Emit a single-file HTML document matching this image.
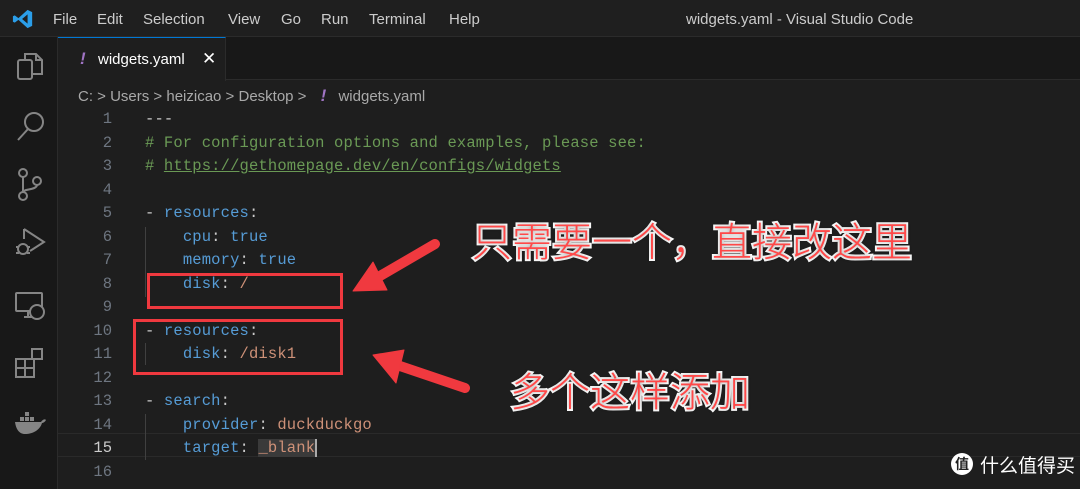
<!DOCTYPE html>
<html><head><meta charset="utf-8"><style>
*{margin:0;padding:0;box-sizing:border-box}
body{width:1080px;height:489px;background:#1e1e1e;overflow:hidden;position:relative;font-family:"Liberation Sans","Noto Sans CJK SC",sans-serif}
.title{position:absolute;left:0;top:0;width:1080px;height:37px;background:#1f1f1f;border-bottom:1px solid #2b2b2b;color:#ccc;font-size:15px}
.title span{position:absolute;top:11px}
.act{position:absolute;left:0;top:37px;width:58px;height:452px;background:#181818;border-right:1px solid #2b2b2b}
.tabs{position:absolute;left:58px;top:37px;width:1022px;height:43px;background:#181818;border-bottom:1px solid #2b2b2b}
.tab{position:absolute;left:0;top:0;width:168px;height:44px;background:#1e1e1e;border-top:1px solid #0078d4;border-right:1px solid #2b2b2b;color:#fff;font-size:15px}
.bc{position:absolute;left:78px;top:86px;color:#a9a9a9;font-size:15px}
.code{position:absolute;left:0;top:108px;font-family:"Liberation Mono",monospace;font-size:15.5px;line-height:23.5px}
.ln{position:absolute;left:60px;width:52px;text-align:right;color:#6e7681}
.tx{position:absolute;left:145px;white-space:pre;color:#ccc;letter-spacing:0.15px}
.c{color:#6a9955}.k{color:#569cd6}.s{color:#ce9178}
.box{position:absolute;border:3px solid #f0393f}
.ann{position:absolute;font-size:40px;color:#ff4848;-webkit-text-stroke:4px #fff;paint-order:stroke fill;font-family:"Noto Sans CJK SC",sans-serif;font-weight:300;text-shadow:0 0 4px rgba(0,0,0,.4)}
.guide{position:absolute;width:1px;background:#404040}
</style></head><body>
<div class="title">
<svg style="position:absolute;left:12px;top:8px" width="22" height="22" viewBox="0 0 24 24"><path d="M17 2 L22 4.5 V19.5 L17 22 L7 13 L3 16 L1 15 V9 L3 8 L7 11 Z M17 7 L11 12 L17 17 Z" fill="#2b9ee9"/></svg>
<span style="left:53px">File</span><span style="left:97px">Edit</span><span style="left:143px">Selection</span><span style="left:228px">View</span><span style="left:281px">Go</span><span style="left:321px">Run</span><span style="left:369px">Terminal</span><span style="left:449px">Help</span>
<span style="left:686px">widgets.yaml - Visual Studio Code</span>
</div>
<div class="act">
<svg style="position:absolute;left:16px;top:14px" width="28" height="30" viewBox="0 0 28 30" fill="none" stroke="#858585" stroke-width="2"><rect x="2" y="9" width="14" height="19" rx="2"/><path d="M9 9V3h11l6 6v14H16"/><path d="M20 3v6h6"/></svg>
<svg style="position:absolute;left:16px;top:73px" width="30" height="32" viewBox="0 0 30 32" fill="none" stroke="#858585" stroke-width="2"><circle cx="18" cy="12" r="9"/><path d="M12 19L2 30"/></svg>
<svg style="position:absolute;left:16px;top:130px" width="28" height="34" viewBox="0 0 28 34" fill="none" stroke="#858585" stroke-width="2"><circle cx="7" cy="6" r="4"/><circle cx="7" cy="29" r="4"/><circle cx="21" cy="14" r="4"/><path d="M7 10v15M21 18c0 5-14 4-14 7"/></svg>
<svg style="position:absolute;left:14px;top:190px" width="32" height="32" viewBox="0 0 32 32" fill="none" stroke="#858585" stroke-width="2"><path d="M10 2l20 13-14 9"/><path d="M10 2v10"/><circle cx="9" cy="22" r="5"/><path d="M2 20h3M13 20h3M2 26h3M13 26h3"/></svg>
<svg style="position:absolute;left:14px;top:252px" width="32" height="32" viewBox="0 0 32 32" fill="none" stroke="#858585" stroke-width="2"><rect x="2" y="4" width="26" height="18" rx="1"/><path d="M10 28h8M14 22v6"/><circle cx="23" cy="23" r="7" fill="#181818"/></svg>
<svg style="position:absolute;left:14px;top:310px" width="32" height="32" viewBox="0 0 32 32" fill="none" stroke="#858585" stroke-width="2"><rect x="2" y="12" width="9" height="9"/><rect x="11" y="12" width="9" height="9"/><rect x="2" y="21" width="9" height="9"/><rect x="11" y="21" width="9" height="9"/><rect x="18" y="2" width="10" height="10"/></svg>
<svg style="position:absolute;left:14px;top:375px" width="32" height="24" viewBox="0 0 32 24"><path d="M1 10h26c2-3 4-3 5-2-1 2-3 3-4 3-2 7-9 11-17 11C5 22 2 17 1 10z" fill="#858585"/><rect x="6" y="5" width="4" height="4" fill="#858585"/><rect x="11" y="5" width="4" height="4" fill="#858585"/><rect x="16" y="5" width="4" height="4" fill="#858585"/><rect x="11" y="0" width="4" height="4" fill="#858585"/></svg>
</div>
<div class="tabs"><div class="tab"><span style="position:absolute;left:22px;top:11px;color:#a074c4;font-style:italic;font-weight:bold;font-size:17px">!</span><span style="position:absolute;left:40px;top:13px">widgets.yaml</span><span style="position:absolute;left:144px;top:11px;font-size:17px">✕</span></div></div>
<div class="bc">C: &gt; Users &gt; heizicao &gt; Desktop &gt; <span style="color:#a074c4;font-style:italic;font-weight:bold;margin:0 8px 0 10px;font-size:17px">!</span> widgets.yaml</div>
<div style="position:absolute;left:58px;top:433px;width:1022px;height:24px;border-top:1px solid #2a2a2a;border-bottom:1px solid #2a2a2a"></div>
<div class="code">
<div class="ln" style="top:0">1</div><div class="tx" style="top:0">---</div>
<div class="ln" style="top:23.5px">2</div><div class="tx c" style="top:23.5px"># For configuration options and examples, please see:</div>
<div class="ln" style="top:47px">3</div><div class="tx c" style="top:47px"># <u>https://gethomepage.dev/en/configs/widgets</u></div>
<div class="ln" style="top:70.5px">4</div>
<div class="ln" style="top:94px">5</div><div class="tx" style="top:94px">- <span class="k">resources</span>:</div>
<div class="ln" style="top:117.5px">6</div><div class="tx" style="top:117.5px">    <span class="k">cpu</span>: <span class="k">true</span></div>
<div class="ln" style="top:141px">7</div><div class="tx" style="top:141px">    <span class="k">memory</span>: <span class="k">true</span></div>
<div class="ln" style="top:164.5px">8</div><div class="tx" style="top:164.5px">    <span class="k">disk</span>: <span class="s">/</span></div>
<div class="ln" style="top:188px">9</div>
<div class="ln" style="top:211.5px">10</div><div class="tx" style="top:211.5px">- <span class="k">resources</span>:</div>
<div class="ln" style="top:235px">11</div><div class="tx" style="top:235px">    <span class="k">disk</span>: <span class="s">/disk1</span></div>
<div class="ln" style="top:258.5px">12</div>
<div class="ln" style="top:282px">13</div><div class="tx" style="top:282px">- <span class="k">search</span>:</div>
<div class="ln" style="top:305.5px">14</div><div class="tx" style="top:305.5px">    <span class="k">provider</span>: <span class="s">duckduckgo</span></div>
<div class="ln" style="top:329px;color:#ccc">15</div><div class="tx" style="top:329px">    <span class="k">target</span>: <span class="s" style="background:#3a3a3a;border-right:2px solid #aaa">_blank</span></div>
<div class="ln" style="top:352.5px">16</div>
</div>
<div class="guide" style="left:145px;top:227px;height:70px"></div>
<div class="guide" style="left:145px;top:343px;height:22px"></div>
<div class="guide" style="left:145px;top:414px;height:46px"></div>
<div class="box" style="left:147px;top:273px;width:196px;height:36px"></div>
<div class="box" style="left:133px;top:319px;width:210px;height:56px"></div>
<svg style="position:absolute;left:0;top:0" width="1080" height="489">
<g fill="#f0393f" stroke="#f0393f" stroke-linejoin="round">
<line x1="435" y1="244" x2="380" y2="276" stroke-width="10" stroke-linecap="round"/>
<polygon points="353,291 373,262 387,290"/>
<line x1="465" y1="388" x2="400" y2="366" stroke-width="10" stroke-linecap="round"/>
<polygon points="373,355 404,350 396,383"/>
</g></svg>
<div class="ann" style="left:472px;top:210px">只需要一个，直接改这里</div>
<div class="ann" style="left:510px;top:360px">多个这样添加</div>
<div style="position:absolute;left:951px;top:453px;width:22px;height:22px;border-radius:50%;background:#fff;color:#222;font-size:14px;text-align:center;line-height:22px;font-family:'Noto Sans CJK SC',sans-serif;font-weight:bold">值</div>
<div style="position:absolute;left:980px;top:451px;color:#fff;font-size:19px;font-family:'Noto Sans CJK SC',sans-serif">什么值得买</div>
</body></html>
